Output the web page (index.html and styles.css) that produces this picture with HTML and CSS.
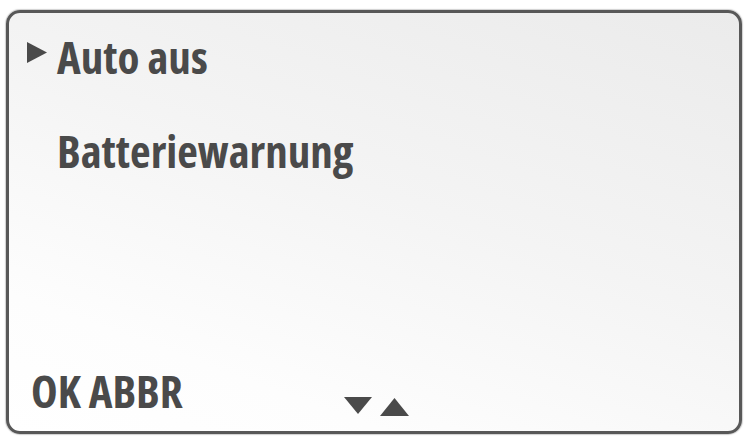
FILE: index.html
```html
<!DOCTYPE html>
<html lang="de">
<head>
<meta charset="utf-8">
<title>Menü</title>
<link rel="stylesheet" href="styles.css">
</head>
<body>
<div class="screen">
  <ul class="menu">
    <li class="item selected">
      <svg class="marker" viewBox="0 0 20 21" width="20" height="21"><polygon points="0,0 20,10.5 0,21" fill="#4a4a4a"/></svg>
      <span class="label">Auto aus</span>
    </li>
    <li class="item">
      <span class="marker"></span>
      <span class="label">Batteriewarnung</span>
    </li>
  </ul>
  <div class="footer">
    <span class="softkeys">OK ABBR</span>
    <span class="arrows">
      <svg class="arrow down" viewBox="0 0 28 17" width="28" height="17"><polygon points="0,0 28,0 14,17" fill="#4a4a4a"/></svg>
      <svg class="arrow up" viewBox="0 0 29 18" width="29" height="18"><polygon points="14.5,0 29,18 0,18" fill="#4a4a4a"/></svg>
    </span>
  </div>
</div>
</body>
</html>
```
FILE: styles.css
```css
html, body {
  margin: 0;
  padding: 0;
  background: #ffffff;
}
body {
  width: 748px;
  height: 437px;
  overflow: hidden;
  font-family: "Open Sans", "DejaVu Sans Condensed", sans-serif;
  font-stretch: 75%;
  font-weight: bold;
  color: #4a4a4a;
}
.screen {
  box-sizing: border-box;
  margin: 10px 6px 0 6px;
  height: 424px;
  border: 3px solid #585858;
  border-radius: 14px;
  box-shadow: 0 0 1px 1px rgba(120,120,120,0.35);
  background: linear-gradient(200deg, #ebebeb 0%, #f4f4f4 45%, #fdfdfd 80%, #ffffff 100%);
  display: flex;
  flex-direction: column;
  padding: 21px 0 0 18px;
}
.menu {
  list-style: none;
  margin: 0;
  padding: 0;
  display: flex;
  flex-direction: column;
  gap: 49px;
}
.item {
  display: flex;
  align-items: center;
  gap: 10px;
  font-size: 45px;
  line-height: 45px;
  height: 45px;
}
.marker {
  flex: 0 0 20px;
  width: 20px;
  height: 21px;
  margin-top: -8px;
}
.label {
  display: block;
}
.footer {
  margin-top: auto;
  margin-bottom: 18px;
  display: flex;
  align-items: flex-end;
  padding-left: 4px;
  font-size: 45px;
  line-height: 45px;
}
.softkeys {
  width: 313px;
}
.arrows {
  display: flex;
  align-items: flex-end;
  gap: 8px;
  margin-bottom: -3px;
}
.arrow.down {
  margin-bottom: 2px;
}
```
